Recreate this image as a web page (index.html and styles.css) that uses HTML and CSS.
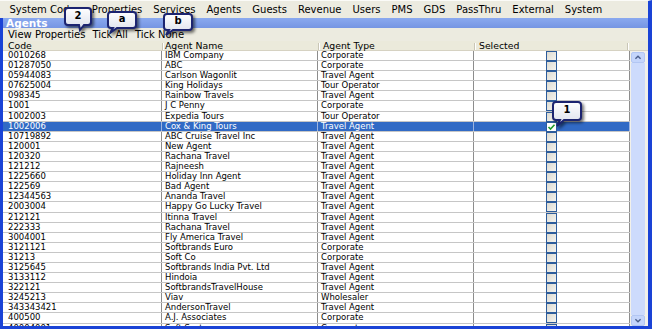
FILE: index.html
```html
<!DOCTYPE html>
<html>
<head>
<meta charset="utf-8">
<link rel="stylesheet" href="styles.css">
</head>
<body>
<div class="window">
  <div class="menubar">
    <span class="menu-item">System Codes</span>
    <span class="menu-item">Properties</span>
    <span class="menu-item">Services</span>
    <span class="menu-item">Agents</span>
    <span class="menu-item">Guests</span>
    <span class="menu-item">Revenue</span>
    <span class="menu-item">Users</span>
    <span class="menu-item">PMS</span>
    <span class="menu-item">GDS</span>
    <span class="menu-item">PassThru</span>
    <span class="menu-item">External</span>
    <span class="menu-item">System</span>
  </div>
  <div class="frame">
    <div class="titlebar">Agents</div>
    <div class="toolbar">
      <span>View Properties</span>
      <span>Tick All</span>
      <span>Tick None</span>
    </div>
    <div class="header">
      <div class="hcell c-code">Code</div>
      <div class="hcell c-name">Agent Name</div>
      <div class="hcell c-type">Agent Type</div>
      <div class="hcell c-sel">Selected</div>
      <div class="hcell c-rest"></div>
    </div>
    <div class="body">
      <div class="rows">
        <div class="row"><div class="cell c-code">0010268</div><div class="cell c-name">IBM Company</div><div class="cell c-type">Corporate</div><div class="cell c-sel"><span class="cb"></span></div></div>
        <div class="row"><div class="cell c-code">01287050</div><div class="cell c-name">ABC</div><div class="cell c-type">Corporate</div><div class="cell c-sel"><span class="cb"></span></div></div>
        <div class="row"><div class="cell c-code">05944083</div><div class="cell c-name">Carlson Wagonlit</div><div class="cell c-type">Travel Agent</div><div class="cell c-sel"><span class="cb"></span></div></div>
        <div class="row"><div class="cell c-code">07625004</div><div class="cell c-name">King Holidays</div><div class="cell c-type">Tour Operator</div><div class="cell c-sel"><span class="cb"></span></div></div>
        <div class="row"><div class="cell c-code">098345</div><div class="cell c-name">Rainbow Travels</div><div class="cell c-type">Travel Agent</div><div class="cell c-sel"><span class="cb"></span></div></div>
        <div class="row"><div class="cell c-code">1001</div><div class="cell c-name">J C Penny</div><div class="cell c-type">Corporate</div><div class="cell c-sel"><span class="cb"></span></div></div>
        <div class="row"><div class="cell c-code">1002003</div><div class="cell c-name">Expedia Tours</div><div class="cell c-type">Tour Operator</div><div class="cell c-sel"><span class="cb"></span></div></div>
        <div class="row selected"><div class="cell c-code">1002006</div><div class="cell c-name">Cox &amp; King Tours</div><div class="cell c-type">Travel Agent</div><div class="cell c-sel"><span class="cb checked"><svg viewBox="0 0 11 10" width="11" height="10"><path d="M2.5 5 L4.5 7 L8.5 2.8" fill="none" stroke="#1f9a2a" stroke-width="1.6"/></svg></span></div></div>
        <div class="row"><div class="cell c-code">10719892</div><div class="cell c-name">ABC Cruise Travel Inc</div><div class="cell c-type">Travel Agent</div><div class="cell c-sel"><span class="cb"></span></div></div>
        <div class="row"><div class="cell c-code">120001</div><div class="cell c-name">New Agent</div><div class="cell c-type">Travel Agent</div><div class="cell c-sel"><span class="cb"></span></div></div>
        <div class="row"><div class="cell c-code">120320</div><div class="cell c-name">Rachana Travel</div><div class="cell c-type">Travel Agent</div><div class="cell c-sel"><span class="cb"></span></div></div>
        <div class="row"><div class="cell c-code">121212</div><div class="cell c-name">Rajneesh</div><div class="cell c-type">Travel Agent</div><div class="cell c-sel"><span class="cb"></span></div></div>
        <div class="row"><div class="cell c-code">1225660</div><div class="cell c-name">Holiday Inn Agent</div><div class="cell c-type">Travel Agent</div><div class="cell c-sel"><span class="cb"></span></div></div>
        <div class="row"><div class="cell c-code">122569</div><div class="cell c-name">Bad Agent</div><div class="cell c-type">Travel Agent</div><div class="cell c-sel"><span class="cb"></span></div></div>
        <div class="row"><div class="cell c-code">12344563</div><div class="cell c-name">Ananda Travel</div><div class="cell c-type">Travel Agent</div><div class="cell c-sel"><span class="cb"></span></div></div>
        <div class="row"><div class="cell c-code">2003004</div><div class="cell c-name">Happy Go Lucky Travel</div><div class="cell c-type">Travel Agent</div><div class="cell c-sel"><span class="cb"></span></div></div>
        <div class="row"><div class="cell c-code">212121</div><div class="cell c-name">Itinna Travel</div><div class="cell c-type">Travel Agent</div><div class="cell c-sel"><span class="cb"></span></div></div>
        <div class="row"><div class="cell c-code">222333</div><div class="cell c-name">Rachana Travel</div><div class="cell c-type">Travel Agent</div><div class="cell c-sel"><span class="cb"></span></div></div>
        <div class="row"><div class="cell c-code">3004001</div><div class="cell c-name">Fly America Travel</div><div class="cell c-type">Travel Agent</div><div class="cell c-sel"><span class="cb"></span></div></div>
        <div class="row"><div class="cell c-code">3121121</div><div class="cell c-name">Softbrands Euro</div><div class="cell c-type">Corporate</div><div class="cell c-sel"><span class="cb"></span></div></div>
        <div class="row"><div class="cell c-code">31213</div><div class="cell c-name">Soft Co</div><div class="cell c-type">Corporate</div><div class="cell c-sel"><span class="cb"></span></div></div>
        <div class="row"><div class="cell c-code">3125645</div><div class="cell c-name">Softbrands India Pvt. Ltd</div><div class="cell c-type">Travel Agent</div><div class="cell c-sel"><span class="cb"></span></div></div>
        <div class="row"><div class="cell c-code">3133112</div><div class="cell c-name">Hindoia</div><div class="cell c-type">Travel Agent</div><div class="cell c-sel"><span class="cb"></span></div></div>
        <div class="row"><div class="cell c-code">322121</div><div class="cell c-name">SoftbrandsTravelHouse</div><div class="cell c-type">Travel Agent</div><div class="cell c-sel"><span class="cb"></span></div></div>
        <div class="row"><div class="cell c-code">3245213</div><div class="cell c-name">Viav</div><div class="cell c-type">Wholesaler</div><div class="cell c-sel"><span class="cb"></span></div></div>
        <div class="row"><div class="cell c-code">343343421</div><div class="cell c-name">AndersonTravel</div><div class="cell c-type">Travel Agent</div><div class="cell c-sel"><span class="cb"></span></div></div>
        <div class="row"><div class="cell c-code">400500</div><div class="cell c-name">A.J. Associates</div><div class="cell c-type">Corporate</div><div class="cell c-sel"><span class="cb"></span></div></div>
        <div class="row"><div class="cell c-code">40004001</div><div class="cell c-name">Soft Systems</div><div class="cell c-type">Corporate</div><div class="cell c-sel"><span class="cb"></span></div></div>
      </div>
      <div class="scrollbar">
        <div class="sb-btn"><svg viewBox="0 0 14 11" width="14" height="11"><path d="M4 7 L7 4 L10 7" fill="none" stroke="#4b5f8c" stroke-width="1.6"/></svg></div>
        <div class="sb-track"></div>
        <div class="sb-btn"><svg viewBox="0 0 14 11" width="14" height="11"><path d="M4 4 L7 7 L10 4" fill="none" stroke="#4b5f8c" stroke-width="1.6"/></svg></div>
      </div>
    </div>
  </div>
</div>

<div class="callout co-2">
  <svg class="balloon" viewBox="0 0 28 24" width="28" height="24"><defs><linearGradient id="g1" x1="0" y1="0" x2="0" y2="1"><stop offset="0" stop-color="#ffffff"/><stop offset="1" stop-color="#d9deea"/></linearGradient></defs><path d="M4 1 H24 Q27 1 27 4 V15 Q27 18 24 18 H20 L16 23 L15 18 H4 Q1 18 1 15 V4 Q1 1 4 1 Z" fill="url(#g1)" stroke="#1c2470" stroke-width="2"/></svg>
  <span class="label">2</span>
</div>
<div class="callout co-a">
  <svg class="balloon" viewBox="0 0 30 24" width="30" height="24"><path d="M4 1 H26 Q29 1 29 4 V14 Q29 17 26 17 H10 L3 22 L6 17 H4 Q1 17 1 14 V4 Q1 1 4 1 Z" fill="url(#g1)" stroke="#1c2470" stroke-width="2"/></svg>
  <span class="label">a</span>
</div>
<div class="callout co-b">
  <svg class="balloon" viewBox="0 0 30 24" width="30" height="24"><path d="M4 1 H26 Q29 1 29 4 V14 Q29 17 26 17 H10 L3 22 L6 17 H4 Q1 17 1 14 V4 Q1 1 4 1 Z" fill="url(#g1)" stroke="#1c2470" stroke-width="2"/></svg>
  <span class="label">b</span>
</div>
<div class="callout co-1">
  <svg class="balloon" viewBox="0 0 30 26" width="30" height="26"><path d="M4 1 H26 Q29 1 29 4 V16 Q29 19 26 19 H12 L5 25 L8 19 H4 Q1 19 1 16 V4 Q1 1 4 1 Z" fill="url(#g1)" stroke="#1c2470" stroke-width="2"/></svg>
  <span class="label">1</span>
</div>
</body>
</html>
```

FILE: styles.css
```css
* { box-sizing: border-box; margin: 0; padding: 0; }

body {
  margin: 0;
  width: 658px;
  height: 335px;
  overflow: hidden;
  position: relative;
  background: #ffffff;
  font-family: "DejaVu Sans", Verdana, sans-serif;
  color: #000;
}

.window { width: 652px; }

.menubar {
  height: 18px;
  background: #ecebe0;
  border-top: 1px solid #fbfbf8;
  border-right: 4px solid #1a43d6;
  display: flex;
  align-items: center;
  padding-left: 4px;
  font-size: 10px;
  white-space: nowrap;
}
.menu-item { padding: 0 5.5px; }

.frame {
  border-style: solid;
  border-color: #1a43d6;
  border-width: 0 4px 3px 3px;
}

.titlebar {
  height: 10px;
  background: linear-gradient(#8aa9ef, #7595e3);
  color: #fff;
  font-weight: bold;
  font-size: 10.5px;
  line-height: 10px;
  padding-left: 3px;
}

.toolbar {
  height: 13px;
  background: #ecebe0;
  display: flex;
  align-items: center;
  gap: 7px;
  padding-left: 5px;
  font-size: 10px;
  white-space: nowrap;
}

.header {
  height: 10px;
  display: flex;
  background: #ebeadb;
  border-bottom: 1px solid #d6d2c2;
  font-size: 9.3px;
  line-height: 10px;
  white-space: nowrap;
}
.hcell { position: relative; padding-left: 5px; }
.hcell + .hcell::before {
  content: "";
  position: absolute;
  left: 0;
  top: 2px;
  height: 7px;
  width: 1px;
  background: #c9c6b6;
  box-shadow: 1px 0 0 #fff;
}
.header .c-code { width: 159px; padding-left: 5px; }
.header .c-name { width: 156px; padding-left: 3px; }
.header .c-type { width: 156px; padding-left: 5px; }
.header .c-sel { width: 153px; padding-left: 5px; }
.header .c-rest { flex: 1; }

.body {
  display: flex;
  height: 275px;
}

.rows {
  width: 627px;
  overflow: hidden;
  background: #fff;
  font-size: 8.5px;
  white-space: nowrap;
}

.row {
  display: flex;
  height: 10.1px;
  border-bottom: 1px solid #c6c6c6;
  line-height: 9.4px;
}
.cell {
  border-right: 1px solid #8d8d8d;
  overflow: hidden;
  height: 9.1px;
}
.row .c-code { width: 159px; padding-left: 5px; }
.row .c-name { width: 156px; padding-left: 3px; }
.row .c-type { width: 156px; padding-left: 3px; }
.row .c-sel { width: 156px; display: flex; justify-content: center; overflow: visible; }

.row.selected { background: #316ac5; color: #fff; }
.row.selected .cell { border-right-color: #9db4df; }

.cb {
  display: block;
  width: 11px;
  height: 10px;
  border: 1px solid #2d5c9b;
  background: linear-gradient(135deg, #dcdad1, #f5f4ef);
  position: relative;
  z-index: 1;
}
.cb.checked { background: #fff; }
.cb svg { position: absolute; left: -1px; top: -1px; }

.scrollbar {
  width: 18px;
  background: #f2f1ea;
  padding: 1px 3px 0 1px;
  display: flex;
  flex-direction: column;
}
.sb-btn {
  height: 11px;
  background: #c4d5fb;
  border: 1px solid #b2c6f3;
  border-radius: 2px;
  display: flex;
  align-items: center;
  justify-content: center;
}
.sb-btn svg { display: block; }
.sb-track {
  flex: 1;
  background: #cddbfc;
}

.callout {
  position: absolute;
  z-index: 5;
}
.balloon {
  display: block;
  overflow: visible;
  filter: drop-shadow(2px 2px 1.5px rgba(0, 0, 0, 0.55));
}
.label {
  position: absolute;
  left: 0;
  right: 0;
  text-align: center;
  font-size: 10px;
  font-weight: bold;
  line-height: 12px;
  color: #000;
}
.co-2 { left: 64px; top: 7px; }
.co-2 .label { top: 3px; }
.co-a { left: 107px; top: 11px; }
.co-a .label { top: 2px; }
.co-b { left: 163px; top: 13px; }
.co-b .label { top: 2px; }
.co-1 { left: 552px; top: 101px; }
.co-1 .label { top: 3px; }
```
